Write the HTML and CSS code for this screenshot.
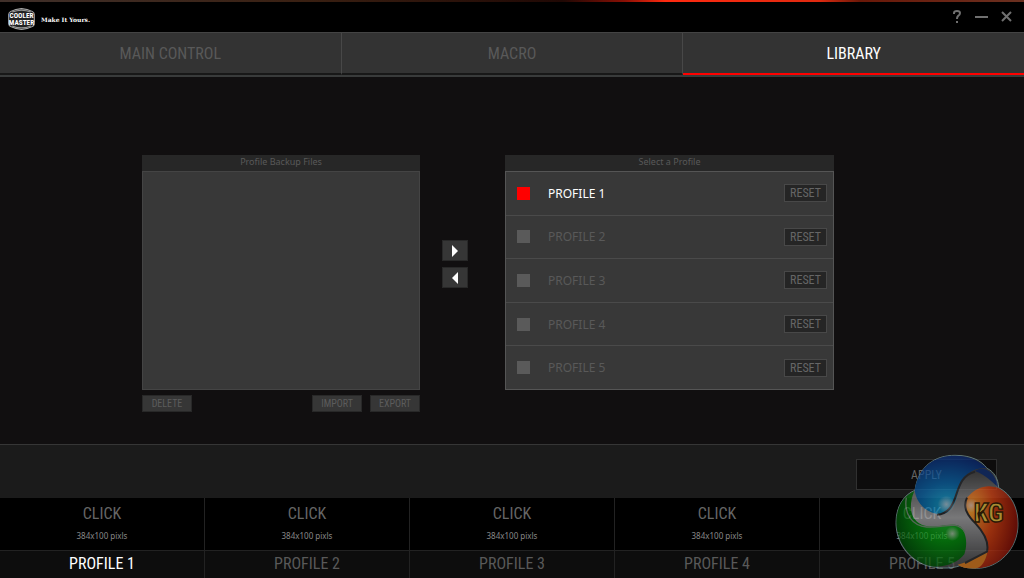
FILE: index.html
```html
<!DOCTYPE html>
<html lang="en">
<head>
    <meta charset="UTF-8">
    <meta name="viewport" content="width=device-width, initial-scale=1.0">
    <title>Cooler Master - Library</title>
    <link rel="stylesheet" href="styles.css">
</head>
<body>
    <header class="titlebar">
        <div class="brand">
            <svg class="brand-logo" viewBox="0 0 78 62">
                <path d="M39 1Q56 2 70 9Q76 12 76 18V44Q76 50 70 53Q56 60 39 61Q22 60 8 53Q2 50 2 44V18Q2 12 8 9Q22 2 39 1Z" fill="#222" stroke="#aaa" stroke-width="3"/>
                <path d="M12 11Q39 0 66 11M12 51Q39 62 66 51" fill="none" stroke="#999" stroke-width="3"/>
                <text x="39" y="29">COOLER</text>
                <text x="39" y="49">MASTER</text>
            </svg>
            <span class="slogan">Make It Yours.</span>
        </div>
        <div class="window-buttons">
            <button type="button" aria-label="Help"><svg viewBox="0 0 14 14"><path d="M4 4V3Q4 1 7 1T10 3Q10 5 8 6Q7 7 7 9M7 11V13"/></svg></button>
            <button type="button" aria-label="Minimize"><svg viewBox="0 0 14 14"><path d="M0 7H13"/></svg></button>
            <button type="button" aria-label="Close"><svg viewBox="0 0 14 14"><path d="M2 2L11 11M11 2L2 11"/></svg></button>
        </div>
    </header>

    <nav class="tabs">
        <a href="#main">MAIN CONTROL</a>
        <a href="#macro">MACRO</a>
        <a href="#library" class="active">LIBRARY</a>
    </nav>

    <main>
        <section class="backup">
            <h2>Profile Backup Files</h2>
            <div class="file-list"></div>
            <div class="file-buttons">
                <button type="button">DELETE</button>
                <button type="button" class="import">IMPORT</button>
                <button type="button">EXPORT</button>
            </div>
        </section>

        <div class="arrows">
            <button type="button" aria-label="Load to profile"><svg viewBox="0 0 8 12"><path d="M1 0L7 6L1 12Z"/></svg></button>
            <button type="button" aria-label="Save to backup"><svg viewBox="0 0 8 12"><path d="M7 0L1 6L7 12Z"/></svg></button>
        </div>

        <section class="select">
            <h2>Select a Profile</h2>
            <ul class="profiles">
                <li><label><input type="radio" name="profile" checked><span>PROFILE 1</span></label><button type="button">RESET</button></li>
                <li><label><input type="radio" name="profile"><span>PROFILE 2</span></label><button type="button">RESET</button></li>
                <li><label><input type="radio" name="profile"><span>PROFILE 3</span></label><button type="button">RESET</button></li>
                <li><label><input type="radio" name="profile"><span>PROFILE 4</span></label><button type="button">RESET</button></li>
                <li><label><input type="radio" name="profile"><span>PROFILE 5</span></label><button type="button">RESET</button></li>
            </ul>
        </section>
    </main>

    <div class="apply-bar">
        <button type="button">APPLY</button>
    </div>

    <footer class="slots">
        <a href="#p1" class="active"><span class="picture"><b>CLICK</b><small>384x100 pixls</small></span><span class="name">PROFILE 1</span></a>
        <a href="#p2"><span class="picture"><b>CLICK</b><small>384x100 pixls</small></span><span class="name">PROFILE 2</span></a>
        <a href="#p3"><span class="picture"><b>CLICK</b><small>384x100 pixls</small></span><span class="name">PROFILE 3</span></a>
        <a href="#p4"><span class="picture"><b>CLICK</b><small>384x100 pixls</small></span><span class="name">PROFILE 4</span></a>
        <a href="#p5"><span class="picture"><b>CLICK</b><small>384x100 pixls</small></span><span class="name">PROFILE 5</span></a>
    </footer>

    <svg class="watermark" viewBox="0 0 372 346">
        <defs>
            <radialGradient id="blue" cx="0.45" cy="0.85" r="0.85">
                <stop offset="0" stop-color="#18a8d0"/>
                <stop offset="0.45" stop-color="#0b68ac"/>
                <stop offset="1" stop-color="#0b2c78"/>
            </radialGradient>
            <radialGradient id="green" cx="0.7" cy="0.3" r="0.8">
                <stop offset="0" stop-color="#2cbc3c"/>
                <stop offset="0.45" stop-color="#089612"/>
                <stop offset="1" stop-color="#034a0a"/>
            </radialGradient>
            <radialGradient id="red" cx="0.1" cy="0.3" r="0.9">
                <stop offset="0" stop-color="#ffa834"/>
                <stop offset="0.5" stop-color="#d84414"/>
                <stop offset="1" stop-color="#8c140a"/>
            </radialGradient>
            <linearGradient id="metal" x1="0" y1="0" x2="0" y2="1">
                <stop offset="0.1" stop-color="#3c3c3c"/>
                <stop offset="0.55" stop-color="#aaaaac"/>
                <stop offset="1" stop-color="#444446"/>
            </linearGradient>
            <radialGradient id="shine">
                <stop offset="0" stop-color="#e8d8e0" stop-opacity="0.7"/>
                <stop offset="1" stop-color="#e8d8e0" stop-opacity="0"/>
            </radialGradient>
        </defs>
        <path d="M60 108C70 35 120 3 180 3C230 3 260 20 276 42C298 52 310 75 311 100C350 120 369 160 369 210C369 285 310 342 245 342C225 342 210 340 195 334C165 345 130 342 95 334C40 315 3 265 3 205C3 155 28 120 60 108Z" fill="url(#metal)" stroke="#7fa3a5" stroke-width="3"/>
        <path d="M59 108C70 35 120 4 180 4C225 4 258 22 275 42C225 38 202 70 190 112C180 150 168 178 138 180C95 178 64 148 59 108Z" fill="url(#blue)"/>
        <path d="M240 50C260 36 285 46 298 68Q308 82 309 99C290 80 270 62 240 50Z" fill="#143274"/>
        <path d="M58 110C24 125 4 160 4 205C6 270 50 320 105 335C150 342 188 325 208 300C218 270 215 235 195 216C165 203 130 224 90 214C48 204 37 160 58 110Z" fill="url(#green)"/>
        <path d="M34 130C26 180 52 214 95 218C145 223 185 194 210 234" fill="none" stroke="#79937c" stroke-width="4"/>
        <path d="M216 130C245 96 276 90 309 100C348 120 368 160 368 210C368 280 315 340 245 342C262 330 274 314 278 288C288 248 242 210 222 182Q206 158 216 130Z" fill="url(#red)"/>
        <path d="M188 331C215 325 232 310 277 293C272 320 260 338 245 342Q210 345 188 331Z" fill="#dc7c20"/>
        <path d="M240 52C204 61 194 90 184 120C173 155 158 180 126 181M216 130C202 160 218 184 242 208C266 234 282 266 276 292L210 326" fill="none" stroke="#303033" stroke-width="6"/>
        <circle cx="154" cy="150" r="26" fill="url(#shine)"/>
        <circle cx="172" cy="238" r="22" fill="url(#shine)"/>
        <circle cx="228" cy="153" r="22" fill="url(#shine)"/>
        <text x="236" y="202">KG</text>
    </svg>
</body>
</html>
```
FILE: styles.css
```css
* {
    box-sizing: border-box;
}

body {
    margin: 0;
    min-height: 100vh;
    display: flex;
    flex-direction: column;
    position: relative;
    background-color: #110f10;
    font-family: 'Noto Sans', sans-serif;
    color: #595959;
}

button {
    padding: 0;
    font-family: 'Roboto Condensed', 'Liberation Sans Narrow', sans-serif;
    color: #666;
    cursor: pointer;
}

a {
    color: #595959;
    text-decoration: none;
}

/* Title bar */
.titlebar {
    height: 32px;
    padding: 2px 9px 0 8px;
    display: flex;
    justify-content: space-between;
    align-items: center;
    background: linear-gradient(90deg, #40302a, #3a2012 30%, #200804 55%, #8a1005 61%, #ff2a10 65%, #e02a10 80%, #6a1808 84%, #6a3020) top / 100% 2px no-repeat #000;
}

.brand {
    display: flex;
    align-items: center;
    gap: 6px;
    padding-top: 4px;
}

.brand-logo {
    display: block;
    width: 27px;
    height: 22px;
}

.brand-logo text {
    font-family: 'Roboto Condensed', 'Liberation Sans Narrow', sans-serif;
    font-size: 21px;
    font-weight: bold;
    text-anchor: middle;
    fill: #fff;
}

.slogan {
    font-family: 'DejaVu Serif', serif;
    font-size: 6px;
    font-weight: bold;
    color: #fff;
}

.window-buttons {
    display: flex;
    gap: 10px;
}

.window-buttons button {
    width: 15px;
    height: 16px;
    border: none;
    background: none;
}

.window-buttons svg {
    display: block;
    width: 14px;
    height: 14px;
    fill: none;
    stroke: #707070;
    stroke-width: 2;
}

/* Tabs */
.tabs {
    display: flex;
    height: 45px;
    border-top: 1px solid #444;
    border-bottom: 2px solid #393b3b;
    background-color: #333;
}

.tabs a {
    flex: 1;
    display: flex;
    align-items: center;
    justify-content: center;
    border-right: 1px solid #484848;
    border-bottom: 2px solid #181818;
    font-family: 'Roboto Condensed', 'Liberation Sans Narrow', sans-serif;
    font-size: 16px;
}

.tabs .active {
    color: #fff;
    border-right: none;
    border-bottom-color: #f00;
}

/* Content */
main {
    flex: 1;
    display: grid;
    grid-template-columns: 278fr 85px 329fr;
    align-items: start;
    padding: 78px 190px 31px 142px;
}

h2 {
    margin: 0;
    height: 16px;
    background-color: #272727;
    font-size: 9px;
    font-weight: normal;
    line-height: 14px;
    text-align: center;
}

.file-list {
    height: 219px;
    border: 1px solid #444;
    background-color: #383838;
}

.file-buttons {
    display: flex;
    gap: 8px;
    margin-top: 5px;
}

.file-buttons button {
    width: 50px;
    height: 17px;
    border: 1px solid #282828;
    background-color: #363636;
    font-size: 10px;
    line-height: 14px;
    color: #5c5c5c;
}

.file-buttons .import {
    margin-left: auto;
}

.arrows {
    display: flex;
    flex-direction: column;
    gap: 6px;
    padding: 85px 0 0 22px;
}

.arrows button {
    width: 26px;
    height: 21px;
    display: flex;
    align-items: center;
    justify-content: center;
    border: 1px solid #282828;
    background-color: #363636;
}

.arrows svg {
    width: 8px;
    height: 12px;
    fill: #fff;
}

.profiles {
    display: flex;
    flex-direction: column;
    height: 219px;
    margin: 0;
    padding: 0;
    list-style: none;
    border: 1px solid #555;
    background-color: #383838;
}

.profiles li {
    flex: 1;
    display: flex;
    align-items: center;
    justify-content: space-between;
    padding: 0 6px 0 11px;
    border-bottom: 1px solid #4a4a4a;
}

.profiles li:last-child {
    border-bottom: none;
}

.profiles label {
    display: flex;
    align-items: center;
    gap: 18px;
    font-size: 12px;
}

.profiles input {
    appearance: none;
    width: 13px;
    height: 13px;
    margin: 0;
    background-color: #5a5a5a;
}

.profiles input:checked {
    background-color: #f00;
}

.profiles input:checked + span {
    color: #fff;
}

.profiles button {
    width: 43px;
    height: 18px;
    border: 1px solid #484848;
    background-color: #252525;
    font-size: 12px;
    line-height: 16px;
}

/* Apply */
.apply-bar {
    height: 54px;
    display: flex;
    justify-content: flex-end;
    padding: 14px 27px 0 0;
    border-top: 1px solid #363636;
    background-color: #1b1b1b;
}

.apply-bar button {
    width: 141px;
    height: 31px;
    border: 1px solid #303030;
    background-color: #0d0c0c;
    font-size: 12px;
}

/* Profile slots */
.slots {
    display: flex;
}

.slots a {
    flex: 1;
    text-align: center;
    border-right: 1px solid #222;
}

.slots a:last-child {
    border-right: none;
}

.picture {
    display: block;
    height: 52px;
    padding-top: 6px;
    background-color: #000;
}

.picture b,
.name {
    display: block;
    font-family: 'Roboto Condensed', 'Liberation Sans Narrow', sans-serif;
    font-size: 16px;
    font-weight: normal;
    line-height: 20px;
}

.picture b {
    color: #666;
}

.picture small {
    display: block;
    margin-top: 6px;
    font-size: 8px;
    line-height: 12px;
    color: #888;
}

.name {
    height: 28px;
    padding-top: 3px;
    border-top: 1px solid #222;
    background-color: #0d0d0d;
}

.slots .active .name {
    color: #fff;
}

/* Site logo over the bottom corner */
.watermark {
    position: absolute;
    right: 5px;
    bottom: 8px;
    width: 124px;
    height: 116px;
    opacity: 0.7;
    pointer-events: none;
}

.watermark text {
    font-family: 'Roboto Condensed', 'Liberation Sans Narrow', sans-serif;
    font-size: 80px;
    font-weight: bold;
    fill: #f0c848;
    stroke: #3a2408;
    stroke-width: 4px;
}
```
